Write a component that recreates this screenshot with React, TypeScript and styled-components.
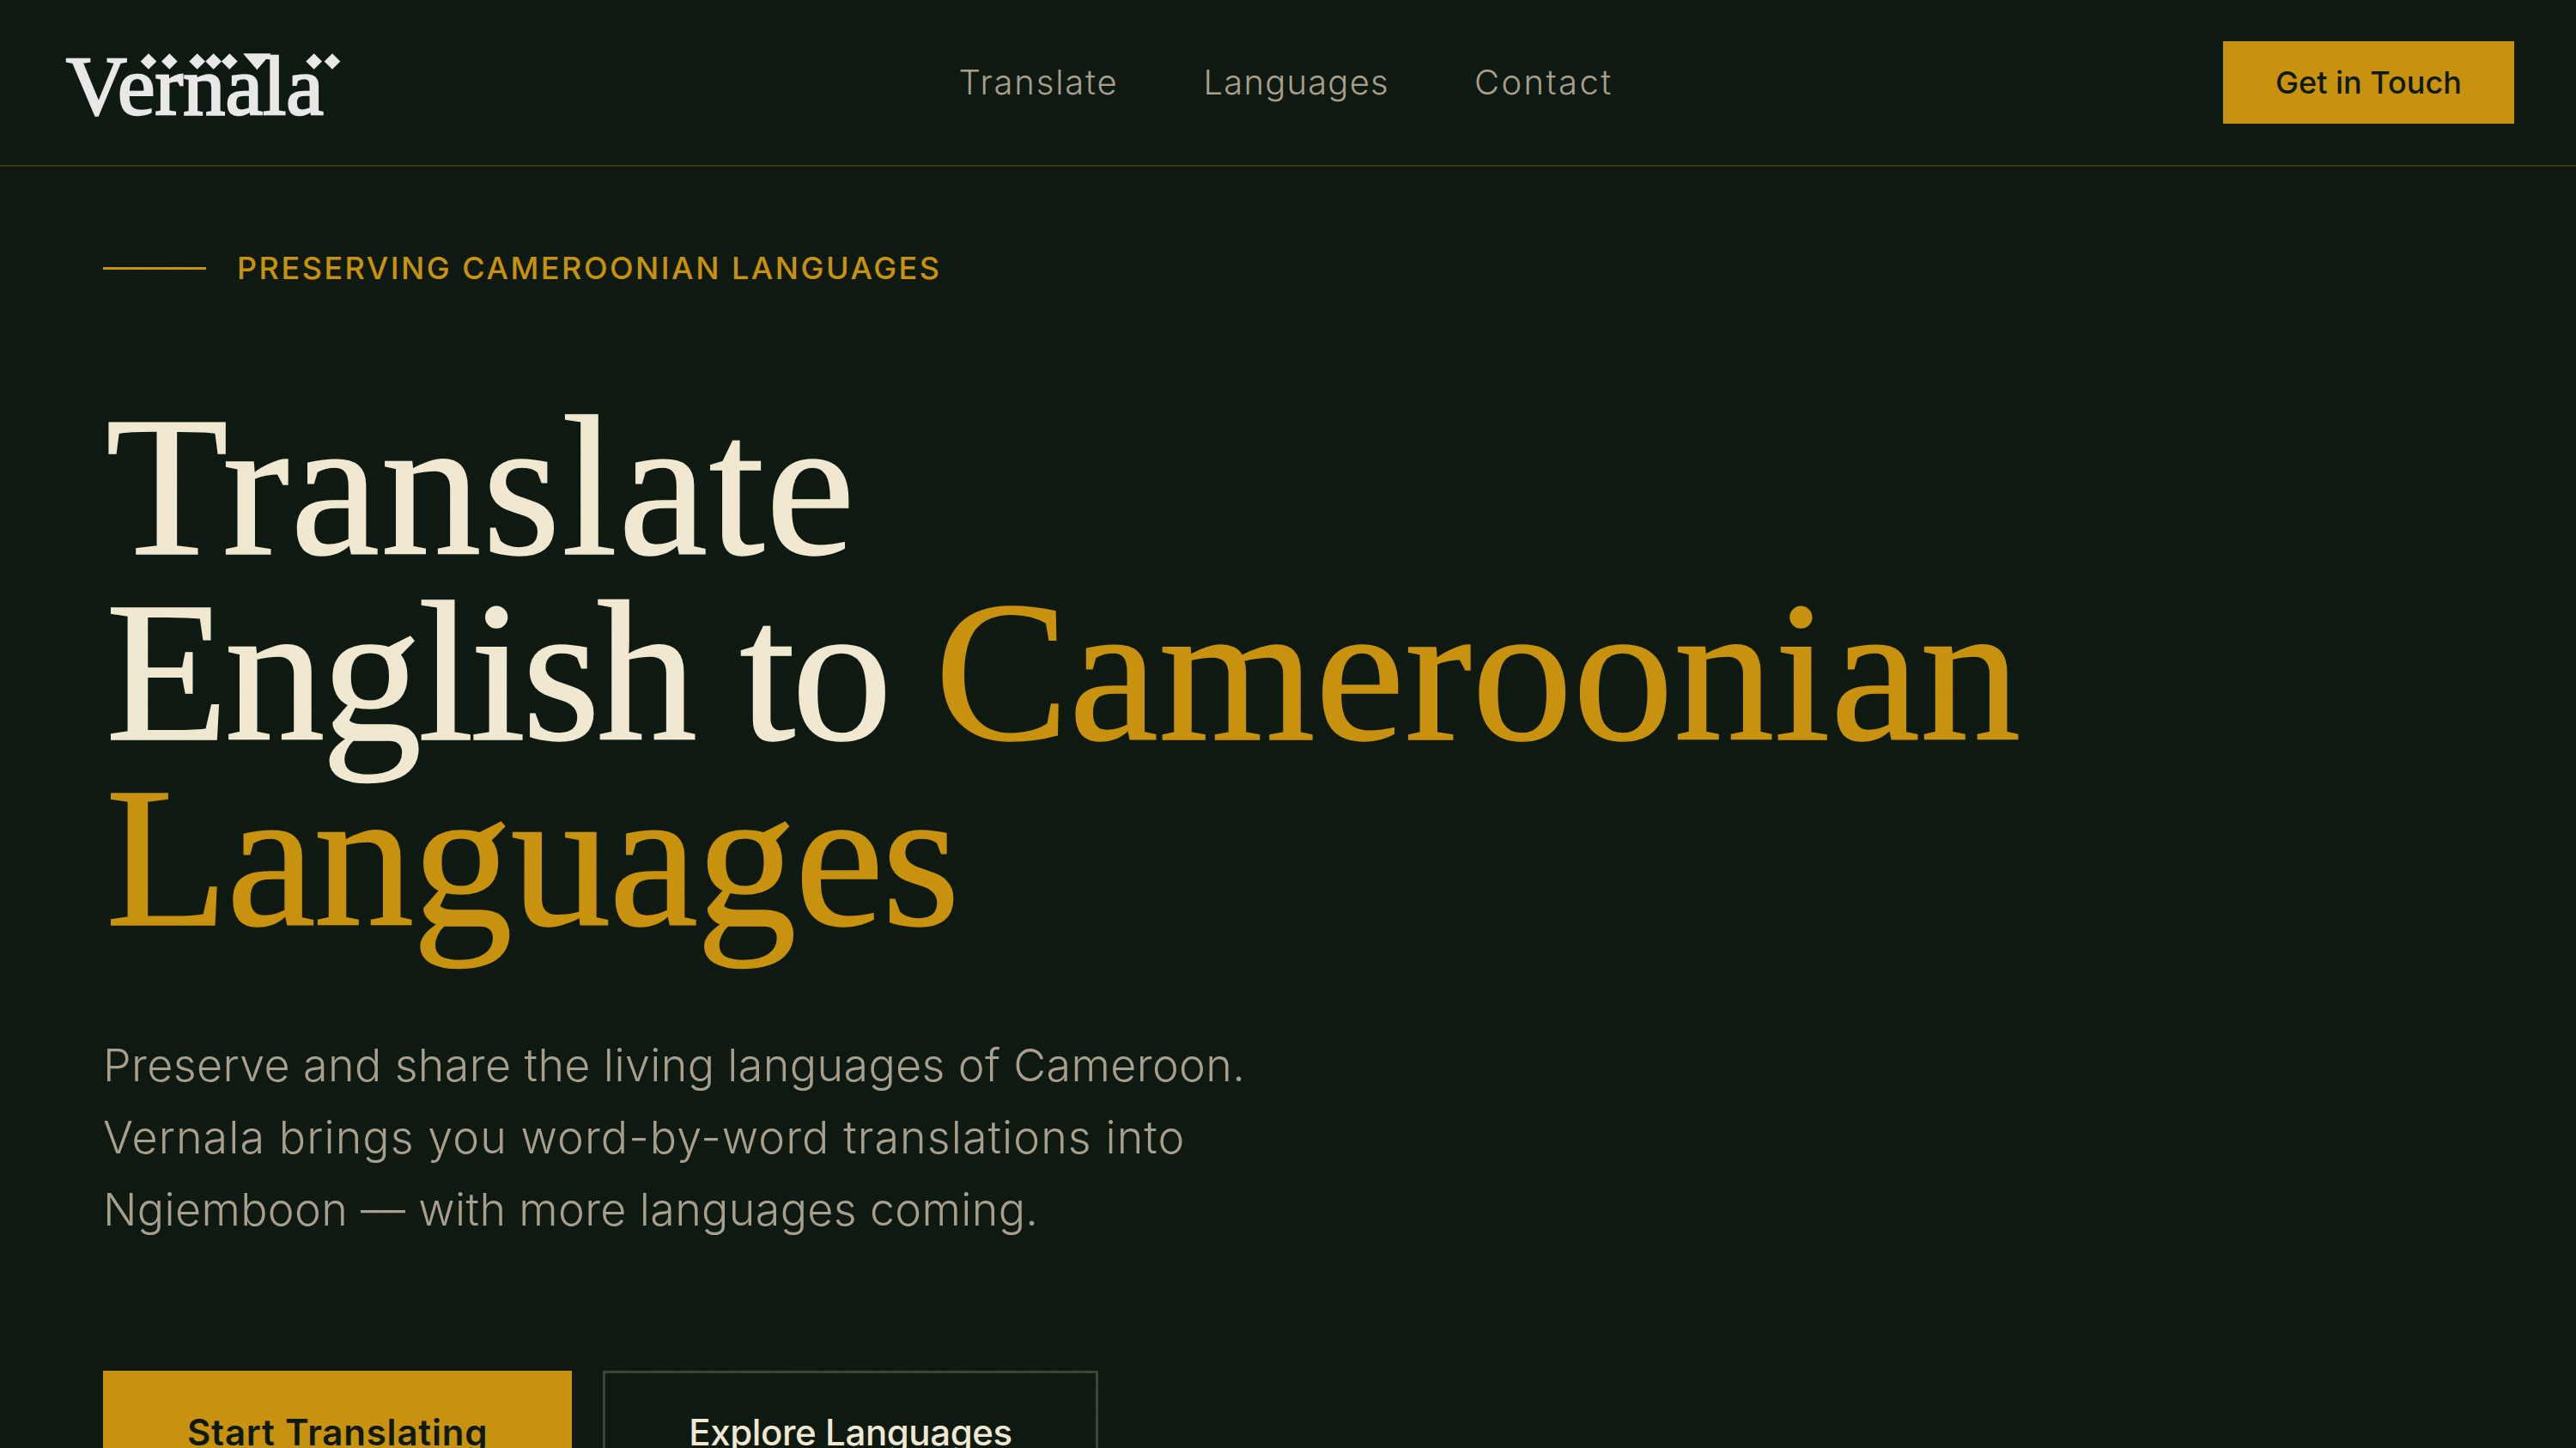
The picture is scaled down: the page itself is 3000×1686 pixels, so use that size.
import React from "react";
import styled, { createGlobalStyle } from "styled-components";

const BG = "#0d1910";
const GOLD = "#c8920d";
const CREAM = "#f0e8d0";
const MUTED = "#a89f8c";

const GRAIN = `url("data:image/svg+xml,%3Csvg xmlns='http://www.w3.org/2000/svg' width='400' height='400'%3E%3Cfilter id='n'%3E%3CfeTurbulence type='fractalNoise' baseFrequency='0.7' numOctaves='3' stitchTiles='stitch'/%3E%3C/filter%3E%3Crect width='400' height='400' filter='url(%23n)' opacity='0.5'/%3E%3C/svg%3E")`;

const GlobalStyle = createGlobalStyle`
  * { box-sizing: border-box; }
  html, body { margin: 0; padding: 0; background: ${BG}; }
  body { font-family: "Inter", "Liberation Sans", sans-serif; overflow: hidden; }
`;

const Page = styled.div`
  position: relative;
  height: 1686px;
  overflow: hidden;
  background: ${BG};
  &::after {
    content: "";
    position: absolute;
    inset: 0;
    pointer-events: none;
    background-image: ${GRAIN};
    opacity: 0.03;
  }
`;

const Header = styled.header`
  height: 194px;
  padding: 0 72px;
  display: flex;
  align-items: center;
  justify-content: space-between;
  border-bottom: 2px solid #3a3512;
`;

const Logo = styled.a`
  position: relative;
  display: block;
  width: 334px;
  height: 96px;
  padding-left: 5px;
  font-family: "Liberation Serif", serif;
  font-size: 98px;
  line-height: 104px;
  letter-spacing: 0.1px;
  color: #e8e8e8;
  -webkit-text-stroke: 2.5px #e8e8e8;
`;

const LogoMarks = styled.svg`
  position: absolute;
  left: 91px;
  top: 13px;
  width: 234px;
  height: 21px;
`;

const Nav = styled.nav`
  display: flex;
  gap: 99px;
`;

const NavLink = styled.a<{ $spacing?: number }>`
  font-size: 40px;
  line-height: 48px;
  font-weight: 350;
  letter-spacing: ${(p) => p.$spacing ?? 1.2}px;
  color: ${MUTED};
`;

const HeaderButton = styled.a`
  width: 339px;
  height: 96px;
  display: flex;
  align-items: center;
  justify-content: center;
  background: ${GOLD};
  color: ${BG};
  font-size: 36px;
  font-weight: 500;
`;

const Hero = styled.main`
  padding: 96px 120px 0;
`;

const Eyebrow = styled.div`
  display: flex;
  align-items: center;
  gap: 36px;
  height: 44px;
  color: ${GOLD};
  font-size: 36px;
  font-weight: 450;
  letter-spacing: 2.5px;
  &::before {
    content: "";
    width: 120px;
    height: 3px;
    background: ${GOLD};
  }
`;

const Title = styled.h1`
  margin: 124px 0 0;
  padding-left: 3px;
  font-family: "Liberation Serif", serif;
  font-weight: 400;
  font-size: 234px;
  line-height: 216px;
  color: ${CREAM};
  -webkit-text-stroke: 1.5px currentColor;
`;

const TitleLine = styled.span`
  display: block;
`;

const TitleRun = styled.span<{ $spacing: number; $accent?: boolean }>`
  letter-spacing: ${(p) => p.$spacing}px;
  color: ${(p) => (p.$accent ? GOLD : CREAM)};
`;

const Lead = styled.p`
  margin: 93px 0 0;
  font-size: 52px;
  line-height: 84px;
  font-weight: 350;
  color: ${MUTED};
`;

const LeadLine = styled.span<{ $spacing: number }>`
  display: block;
  letter-spacing: ${(p) => p.$spacing}px;
`;

const Actions = styled.div`
  margin-top: 145px;
  display: flex;
  gap: 36px;
`;

const CtaButton = styled.a<{ $primary?: boolean }>`
  padding: 39px ${(p) => (p.$primary ? 95 : 97)}px;
  font-size: 42px;
  line-height: 60px;
  font-weight: ${(p) => (p.$primary ? 600 : 500)};
  letter-spacing: ${(p) => (p.$primary ? 0.8 : -0.4)}px;
  background: ${(p) => (p.$primary ? GOLD : "transparent")};
  color: ${(p) => (p.$primary ? BG : CREAM)};
  border: 3px solid ${(p) => (p.$primary ? GOLD : "#3d4435")};
`;

const BrandLogo = () => (
  <Logo>
    Vernala
    <LogoMarks viewBox="370 90 702 62" aria-hidden="true">
      <g fill="#e8e8e8" stroke="none">
        {[400, 473, 570, 627, 683, 978, 1042].map((cx) => (
          <path key={cx} d={`M${cx - 28} 121 L${cx} 93 L${cx + 28} 121 L${cx} 149 Z`} />
        ))}
        <path d="M730 93 H828 L779 150 Z" />
      </g>
    </LogoMarks>
  </Logo>
);

export default function App() {
  return (
    <Page>
      <GlobalStyle />
      <Header>
        <BrandLogo />
        <Nav>
          <NavLink $spacing={1.8}>Translate</NavLink>
          <NavLink>Languages</NavLink>
          <NavLink $spacing={2.4}>Contact</NavLink>
        </Nav>
        <HeaderButton>Get in Touch</HeaderButton>
      </Header>
      <Hero>
        <Eyebrow>PRESERVING CAMEROONIAN LANGUAGES</Eyebrow>
        <Title>
          <TitleLine>
            <TitleRun $spacing={1.3}>Translate</TitleRun>
          </TitleLine>
          <TitleLine>
            <TitleRun $spacing={-4.4}>English to </TitleRun>
            <TitleRun $spacing={0.4} $accent>
              Cameroonian
            </TitleRun>
          </TitleLine>
          <TitleLine>
            <TitleRun $spacing={-2.3} $accent>
              Languages
            </TitleRun>
          </TitleLine>
        </Title>
        <Lead>
          <LeadLine $spacing={0.37}>Preserve and share the living languages of Cameroon.</LeadLine>
          <LeadLine $spacing={1.07}>Vernala brings you word-by-word translations into</LeadLine>
          <LeadLine $spacing={0.34}>Ngiemboon — with more languages coming.</LeadLine>
        </Lead>
        <Actions>
          <CtaButton $primary>Start Translating</CtaButton>
          <CtaButton>Explore Languages</CtaButton>
        </Actions>
      </Hero>
    </Page>
  );
}
